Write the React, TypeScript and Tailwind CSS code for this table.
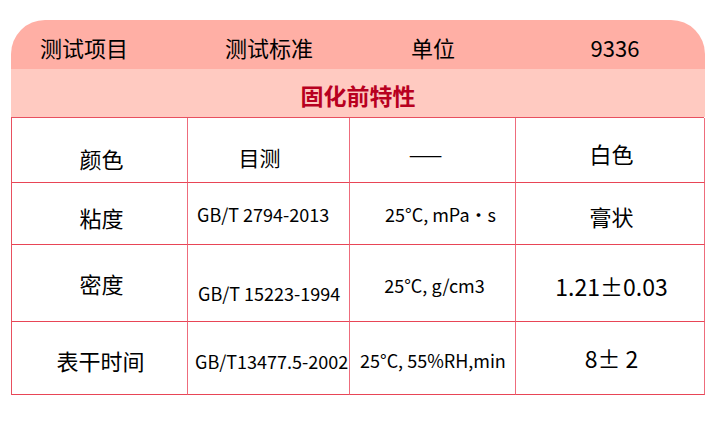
import React from "react";

const cjk = { fontFamily: '"Noto Sans CJK SC", "Noto Sans", sans-serif' };

type Cell = { text: string; cls: string; dash?: boolean };

const rows: { h: string; cells: Cell[] }[] = [
  {
    h: "h-[65px]",
    cells: [
      { text: "颜色", cls: "justify-center pt-[15px] pl-[4px] text-[22px]" },
      { text: "目测", cls: "justify-center pt-[15px] pr-[18px] text-[21px]" },
      { text: "—", dash: true, cls: "justify-center pt-[1px] pr-[14px] text-[40px] leading-none" },
      { text: "白色", cls: "justify-center pt-[6px] pl-[3px] text-[22px]" },
    ],
  },
  {
    h: "h-[62px]",
    cells: [
      { text: "粘度", cls: "justify-center pt-[7px] pl-[4px] text-[22px]" },
      { text: "GB/T 2794-2013", cls: "justify-start pl-[9px] pt-0 text-[18px]" },
      { text: "25°C, mPa・s", cls: "justify-center pl-[16px] pt-0 text-[18px]" },
      { text: "膏状", cls: "justify-center pt-[5px] pl-[3px] text-[22px]" },
    ],
  },
  {
    h: "h-[77px]",
    cells: [
      { text: "密度", cls: "justify-center pt-0 pl-[4px] text-[22px]" },
      { text: "GB/T 15223-1994", cls: "justify-start pl-[10px] pt-[19px] text-[18px]" },
      { text: "25°C, g/cm3", cls: "justify-center pt-[4px] pl-[4px] text-[18px]" },
      { text: "1.21±0.03", cls: "justify-center pt-[6px] pl-[3px] text-[23px]" },
    ],
  },
  {
    h: "h-[73px]",
    cells: [
      { text: "表干时间", cls: "justify-center pt-[4px] pl-[2px] text-[22px]" },
      { text: "GB/T13477.5-2002", cls: "justify-start pl-[7px] pt-[6px] text-[18px]" },
      { text: "25°C, 55%RH,min", cls: "justify-start pl-[10px] pt-[4px] text-[18px]" },
      { text: "8± 2", cls: "justify-center pt-0 pl-[3px] text-[23px]" },
    ],
  },
];

export default function App() {
  return (
    <div className="w-[717px] h-[421px] bg-white pt-[20px] pl-[11px] text-black" style={cjk}>
      <div className="w-[694px]">
        <div className="h-[49px] bg-[#ffafa5] rounded-t-[34px] grid grid-cols-[176px_162px_166px_190px] items-center pt-[4px] text-[22px] leading-none">
          <div className="flex justify-center pr-[30px]">测试项目</div>
          <div className="flex justify-center pl-[2px]">测试标准</div>
          <div className="flex justify-center pl-[2px]">单位</div>
          <div className="flex justify-center pl-[10px]">9336</div>
        </div>
        <div className="h-[48px] bg-[#ffcac1] flex items-center justify-center pt-[5px] text-[23px] font-bold text-[#b8001f] leading-none">
          固化前特性
        </div>
        <div className="w-[693px] border-t border-l border-[#e8505f] grid grid-cols-[176px_162px_166px_189px]">
          {rows.map((r, i) =>
            r.cells.map((c, j) => (
              <div
                key={`${i}-${j}`}
                className={`${r.h} border-b border-r border-b-[#e84556] border-r-[#ee6c7c] flex items-center leading-none whitespace-nowrap ${c.cls}`}
              >
                {c.dash ? <span className="font-thin">{c.text}</span> : c.text}
              </div>
            ))
          )}
        </div>
      </div>
    </div>
  );
}
